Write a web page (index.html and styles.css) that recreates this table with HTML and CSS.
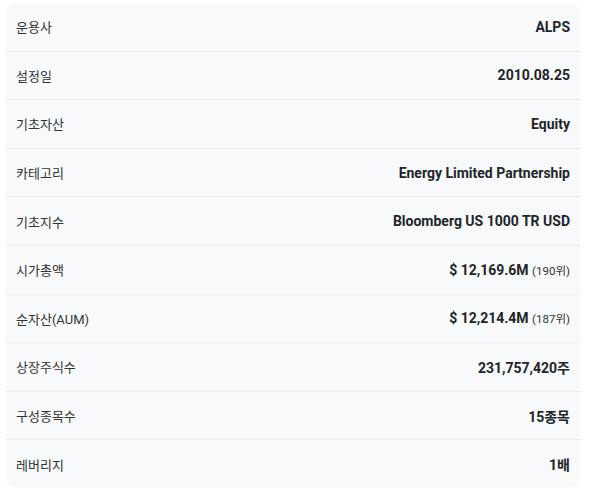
FILE: index.html
```html
<!DOCTYPE html>
<html lang="ko">
<head>
    <meta charset="UTF-8">
    <meta name="viewport" content="width=device-width, initial-scale=1.0">
    <title>ETF 기본정보</title>
    <link rel="stylesheet" href="styles.css">
</head>
<body>

<div class="info-card">
    <div class="info-row">
        <span class="info-label">운용사</span>
        <span class="info-value">ALPS</span>
    </div>
    <div class="info-row">
        <span class="info-label">설정일</span>
        <span class="info-value">2010.08.25</span>
    </div>
    <div class="info-row">
        <span class="info-label">기초자산</span>
        <span class="info-value">Equity</span>
    </div>
    <div class="info-row">
        <span class="info-label">카테고리</span>
        <span class="info-value">Energy Limited Partnership</span>
    </div>
    <div class="info-row">
        <span class="info-label">기초지수</span>
        <span class="info-value">Bloomberg US 1000 TR USD</span>
    </div>
    <div class="info-row">
        <span class="info-label">시가총액</span>
        <span class="info-value">$ 12,169.6M <span class="rank">(190위)</span></span>
    </div>
    <div class="info-row">
        <span class="info-label">순자산(AUM)</span>
        <span class="info-value">$ 12,214.4M <span class="rank">(187위)</span></span>
    </div>
    <div class="info-row">
        <span class="info-label">상장주식수</span>
        <span class="info-value">231,757,420주</span>
    </div>
    <div class="info-row">
        <span class="info-label">구성종목수</span>
        <span class="info-value">15종목</span>
    </div>
    <div class="info-row">
        <span class="info-label">레버리지</span>
        <span class="info-value">1배</span>
    </div>
</div>

</body>
</html>
```

FILE: styles.css
```css
body {
    font-family: Roboto, "Noto Sans CJK KR", sans-serif;
    margin: 0;
    padding: 3px 9px 0 6px;
    background-color: #ffffff;
    color: #333;
}

/* Info card */
.info-card {
    width: 574px;
    background-color: #f8f9fa;
    border-radius: 10px;
}

.info-row {
    height: 47.6px;
    padding: 0 10px;
    display: flex;
    justify-content: space-between;
    align-items: center;
    border-bottom: 1px solid #e9ecef;
}

.info-row:last-child {
    border-bottom: none;
}

.info-label {
    font-size: 13px;
    color: #333;
}

.info-value {
    font-size: 14px;
    font-weight: bold;
    color: #212529;
}

.rank {
    font-size: 11.5px;
    font-weight: normal;
    color: #333;
}
```
